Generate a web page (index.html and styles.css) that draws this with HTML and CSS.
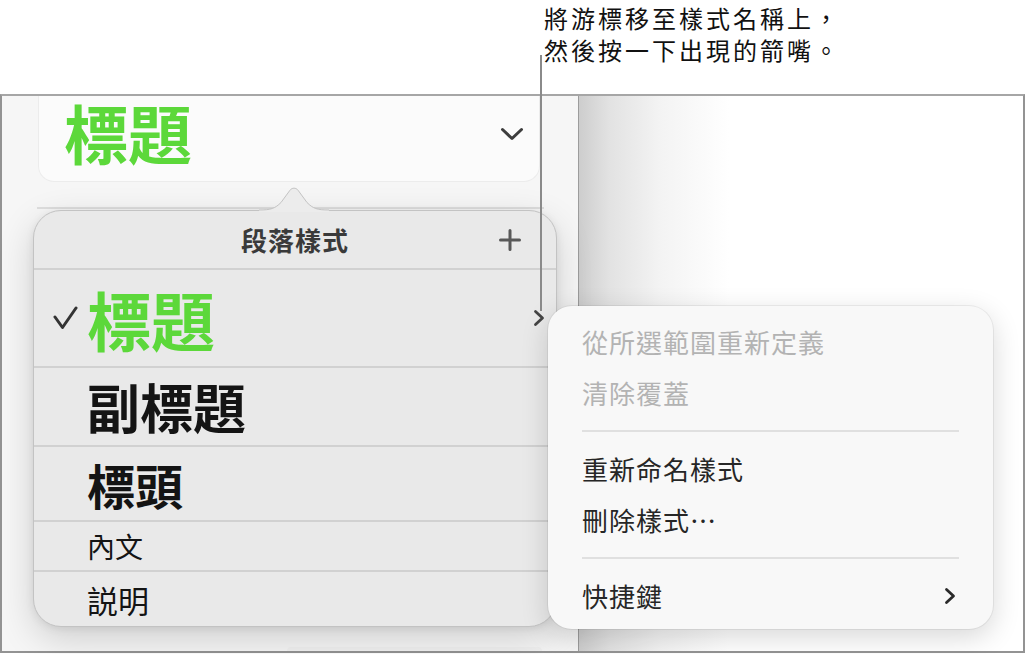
FILE: index.html
```html
<!DOCTYPE html>
<html lang="zh-Hant-HK">
<head>
<meta charset="utf-8">
<title>段落樣式</title>
<link rel="stylesheet" href="styles.css">
</head>
<body>
  <p class="note">將游標移至樣式名稱上，<br>然後按一下出現的箭嘴。</p>
  <span class="note-line"></span>

  <div class="window">
    <aside class="sidebar">
      <div class="style-picker">
        <span class="style-picker-name">標題</span>
        <svg class="chevron-down" width="24" height="14" viewBox="0 0 24 14"><path d="M2.5 2.5 L12 11.5 L21.5 2.5"/></svg>
      </div>
      <hr class="rule">
      <div class="next-field"></div>
    </aside>
    <main class="canvas"></main>

    <section class="popover">
      <svg class="popover-arrow" width="70" height="26" viewBox="0 0 70 26">
        <path class="arrow-fill" d="M0 24 C12 24 16 22.5 22 16.5 L31 4.2 C33 1.5 37 1.5 39 4.2 L48 16.5 C54 22.5 58 24 70 24 L70 26 L0 26 Z"/>
        <path class="arrow-edge" d="M0 24 C12 24 16 22.5 22 16.5 L31 4.2 C33 1.5 37 1.5 39 4.2 L48 16.5 C54 22.5 58 24 70 24"/>
      </svg>
      <header class="popover-head">
        <span></span>
        <span class="popover-title">段落樣式</span>
        <svg class="plus" width="22" height="22" viewBox="0 0 22 22"><path d="M11 1.5 V20.5 M1.5 11 H20.5"/></svg>
      </header>
      <ul class="style-list">
        <li class="style-row">
          <svg class="check" width="25" height="24" viewBox="0 0 25 24"><path d="M2 11 L9.5 21.5 L23 2"/></svg>
          <span class="style-name is-title">標題</span>
          <svg class="chevron-right" width="12" height="18" viewBox="0 0 12 18"><path d="M2.5 2.5 L9.5 9 L2.5 15.5"/></svg>
        </li>
        <li class="style-row row-subtitle"><span></span><span class="style-name is-subtitle">副標題</span></li>
        <li class="style-row row-heading"><span></span><span class="style-name is-heading">標頭</span></li>
        <li class="style-row row-body"><span></span><span class="style-name is-body">內文</span></li>
        <li class="style-row row-caption"><span></span><span class="style-name is-caption">説明</span></li>
      </ul>
    </section>

    <ul class="menu">
      <li class="menu-item is-disabled">從所選範圍重新定義</li>
      <li class="menu-item is-disabled">清除覆蓋</li>
      <li class="menu-sep"></li>
      <li class="menu-item">重新命名樣式</li>
      <li class="menu-item">刪除樣式⋯</li>
      <li class="menu-sep"></li>
      <li class="menu-item">快捷鍵
        <svg class="chevron-right dark" width="12" height="18" viewBox="0 0 12 18"><path d="M2.5 2.5 L9.5 9 L2.5 15.5"/></svg>
      </li>
    </ul>
  </div>
</body>
</html>
```

FILE: styles.css
```css
* {
  box-sizing: border-box;
}

html,
body {
  margin: 0;
  padding: 0;
}

body {
  position: relative;
  width: 1027px;
  height: 654px;
  overflow: hidden;
  background: #ffffff;
  font-family: "Noto Sans CJK TC", "Noto Sans", sans-serif;
  color: #1f1f1f;
}

/* annotation above the window */
.note {
  height: 94px;
  margin: 0;
  padding: 4px 0 0 544px;
  font-family: "Liberation Sans", "Noto Sans CJK TC", sans-serif;
  font-size: 24px;
  line-height: 32px;
  letter-spacing: 3px;
  color: #111111;
}

.note-line {
  position: absolute;
  left: 540px;
  top: 55px;
  width: 2px;
  height: 256px;
  background: #8a8a8a;
  z-index: 5;
}

/* app window */
.window {
  position: relative;
  display: flex;
  width: 1025px;
  height: 559px;
  border: 2px solid #939393;
  border-top-color: #a6a6a6;
}

.sidebar {
  flex: none;
  width: 577px;
  background: #f6f6f6;
  border-right: 1px solid #9c9c9c;
}

/* current style field, scrolled so only its lower part shows */
.style-picker {
  display: flex;
  align-items: center;
  justify-content: space-between;
  width: 502px;
  height: 86px;
  margin: 0 0 0 36px;
  padding: 0 15px 15px 25px;
  background: #fbfbfb;
  border: 1px solid #ececec;
  border-top: 0;
  border-radius: 0 0 16px 16px;
}

.style-picker-name {
  font-size: 64px;
  font-weight: 700;
  line-height: 1;
  color: #5cd83a;
}

.chevron-down path,
.chevron-right path,
.check path,
.plus path {
  fill: none;
  stroke-linecap: round;
  stroke-linejoin: round;
}

.chevron-down {
  margin-top: 6px;
}

.chevron-down path {
  stroke: #3d3d3d;
  stroke-width: 3;
}

.rule {
  width: 507px;
  height: 2px;
  margin: 25px 0 0 35px;
  border: 0;
  background: #dedede;
}

.next-field {
  width: 255px;
  height: 4px;
  margin: 438px 0 0 285px;
  background: #f1f1f1;
  border-radius: 4px 4px 0 0;
}

.canvas {
  flex: 1;
  background: linear-gradient(90deg, #cdcdcd 0, #e2e2e2 30px, #f3f3f3 80px, #ffffff 150px);
}

/* paragraph styles popover */
.popover {
  position: absolute;
  left: 31px;
  top: 114px;
  width: 524px;
  height: 417px;
  background: #e9e9e9;
  border: 1px solid #c3c3c3;
  border-radius: 28px;
  box-shadow: 0 12px 36px rgba(0, 0, 0, 0.16), 0 2px 8px rgba(0, 0, 0, 0.08);
  z-index: 2;
}

.popover-arrow {
  position: absolute;
  left: 225px;
  top: -25px;
}

.arrow-fill {
  fill: #ececec;
}

.arrow-edge {
  fill: none;
  stroke: #c3c3c3;
  stroke-width: 1;
}

.popover-head {
  display: grid;
  grid-template-columns: 1fr auto 1fr;
  align-items: center;
  height: 59px;
  padding: 0 35px;
  border-bottom: 2px solid #d1d1d1;
}

.popover-title {
  font-size: 26px;
  font-weight: 700;
  line-height: 1;
  letter-spacing: 1px;
  color: #3a3a3a;
}

.plus {
  justify-self: end;
}

.plus path {
  stroke: #585858;
  stroke-width: 3;
}

.style-list {
  margin: 0;
  padding: 0;
  list-style: none;
}

.style-row {
  display: grid;
  grid-template-columns: 34px 1fr auto;
  align-items: center;
  height: 98px;
  padding: 0 11px 0 19px;
  border-bottom: 2px solid #d1d1d1;
}

.row-subtitle {
  height: 79px;
}

.row-heading {
  height: 75px;
}

.row-body {
  height: 50px;
}

.row-caption {
  height: 54px;
  border-bottom: 0;
}

.check path {
  stroke: #333333;
  stroke-width: 3;
}

.chevron-right path {
  stroke: #444444;
  stroke-width: 2.8;
}

.chevron-right.dark path {
  stroke: #2a2a2a;
}

.style-name {
  line-height: 1;
  color: #141414;
}

.is-title {
  font-size: 64px;
  font-weight: 700;
  color: #5cd83a;
}

.is-subtitle {
  font-size: 53px;
  font-weight: 700;
}

.is-heading {
  font-size: 48px;
  font-weight: 700;
}

.is-body {
  font-size: 28px;
}

.is-caption {
  font-size: 31px;
}

/* style actions menu */
.menu {
  position: absolute;
  left: 546px;
  top: 210px;
  width: 445px;
  height: 323px;
  margin: 0;
  padding: 10px 0;
  list-style: none;
  background: #f8f8f8;
  border-radius: 24px;
  box-shadow: 0 8px 28px rgba(0, 0, 0, 0.16), 0 0 0 1px rgba(0, 0, 0, 0.06);
  z-index: 3;
}

.menu-item {
  display: flex;
  align-items: center;
  justify-content: space-between;
  height: 51px;
  padding: 0 37px 0 34px;
  font-size: 26px;
  line-height: 1;
  letter-spacing: 1px;
  color: #262626;
}

.menu-item.is-disabled {
  color: #b3b3b3;
}

.menu-sep {
  height: 2px;
  margin: 12px 34px 11px;
  background: #e0e0e0;
}
```
